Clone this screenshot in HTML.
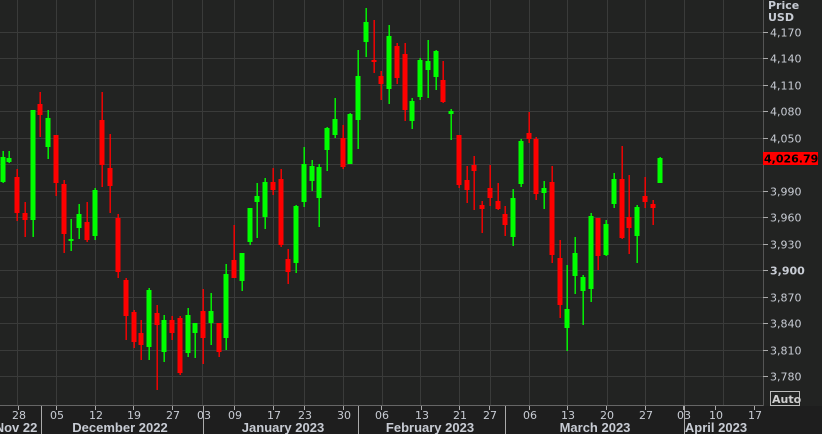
<!DOCTYPE html>
<html><head><meta charset="utf-8"><style>
html,body{margin:0;padding:0;background:#222322;width:822px;height:434px;overflow:hidden}
svg{display:block}
text{font-family:"DejaVu Sans","Liberation Sans",sans-serif}
.m{font-family:"Liberation Sans",sans-serif}
</style></head><body>
<svg id="s" width="822" height="434" xmlns="http://www.w3.org/2000/svg">
<rect width="822" height="434" fill="#222322"/>
<rect x="0" y="406" width="822" height="28" fill="#1e1e1e"/>
<g id="grid" stroke="#3a3b3a" stroke-width="1"></g>
<g id="c"></g>
<line x1="763.5" y1="0" x2="763.5" y2="406" stroke="#555" />
<line x1="0" y1="405.5" x2="763" y2="405.5" stroke="#666"/>
<g id="ax" fill="#c8ccd4" font-size="11"></g>
<text x="768" y="9" fill="#c8ccd4" font-size="11" font-weight="bold">Price</text>
<text x="768" y="21" fill="#c8ccd4" font-size="11" font-weight="bold">USD</text>
<rect x="763" y="152" width="55" height="13" fill="#ff0000"/>
<text x="764" y="162.5" fill="#000" font-size="11" font-weight="bold">4,026.79</text>
<rect x="770.5" y="391.5" width="29" height="14" fill="none" stroke="#bbb"/>
<text x="772" y="403" fill="#d0d0d0" font-size="11" font-weight="bold">Auto</text>
<g id="bt" font-size="11" fill="#c8ccd4" text-anchor="middle"></g>
</svg>
<script>
var NS="http://www.w3.org/2000/svg";
function el(p,t,a,txt){var e=document.createElementNS(NS,t);for(var k in a)e.setAttribute(k,a[k]);if(txt!=null)e.textContent=txt;document.getElementById(p).appendChild(e);}
var vx=[17,56,95,133,172,202,234,273,304,343,382,420,459,490,529,567,607,645,684,723];
vx.forEach(function(x){el("grid","line",{x1:x+.5,y1:0,x2:x+.5,y2:405});});
var labs=["4,170","4,140","4,110","4,080","4,050","4,020","3,990","3,960","3,930","3,900","3,870","3,840","3,810","3,780"];
labs.forEach(function(l,i){var y=Math.round(32+i*26.46)+.5;el("grid","line",{x1:0,y1:y,x2:763,y2:y});
el("ax","line",{x1:763,y1:y,x2:768,y2:y,stroke:"#aaa"});
if(i!=5)el("ax","text",{x:770,y:y+4,"font-weight":i==9?"bold":"normal"},l);});
var C=[[3,157,182,151,183,1],[9,158,162,151,163,1],[17,177,213,169,221,0],[25,213,220,202,237,0],[33,110,220,110,237,1],[40,104,115,92,137,0],[48,118,147,110,159,1],[56,135,183,135,196,0],[64,184,234,180,253,0],[71,239,241,219,251,1],[79,214,228,204,239,1],[87,222,240,202,242,0],[95,190,236,188,240,1],[102,120,165,92,187,0],[110,168,186,134,213,0],[118,218,272,214,278,0],[126,280,316,278,340,0],[134,312,342,310,348,0],[141,333,345,320,360,0],[149,290,347,288,360,1],[157,313,325,305,390,0],[164,320,352,315,362,1],[172,320,333,316,340,0],[180,318,373,316,375,0],[188,315,353,308,357,1],
[195,323,333,323,358,1],[203,311,338,289,364,0],[211,311,323,293,345,1],[219,323,352,323,357,0],[226,274,338,264,350,1],[234,260,278,225,278,0],[242,253,281,253,291,1],[250,208,242,208,245,1],[257,196,202,183,238,1],[265,182,217,178,229,1],[273,182,190,168,195,0],[281,179,245,169,247,0],[288,259,272,249,284,0],[296,206,263,205,273,1],[304,164,202,147,207,1],[312,166,181,160,191,1],[319,167,198,164,227,1],[327,128,150,127,171,1],[335,119,135,98,138,1],[343,138,167,125,169,0],[350,114,164,113,164,1],[358,76,120,50,149,1],[366,22,42,8,57,1],[374,60,62,20,73,0],[381,76,84,71,100,0],
[389,36,89,25,104,1],[397,46,78,43,84,0],[405,54,110,43,121,0],[412,101,121,98,129,1],[420,60,97,58,100,1],[428,61,70,40,98,1],[436,51,77,50,90,1],[443,80,102,61,103,0],[451,111,114,109,140,1],[459,135,185,135,188,0],[467,180,190,166,203,0],[474,165,171,156,210,0],[482,205,209,201,233,0],[490,188,198,165,206,0],[498,201,209,183,210,0],[505,214,225,206,236,0],[513,198,237,189,246,1],[521,141,184,139,187,1],[529,133,139,112,143,0],[536,139,194,137,200,0],[544,188,193,181,209,1],[552,182,255,166,263,0],[560,258,305,240,318,0],[567,309,328,265,351,1],[575,253,276,237,294,1],[583,277,291,275,325,1],[591,216,289,213,302,1],[598,218,256,218,270,0],[606,224,255,220,256,1],[614,179,204,173,208,1],[622,179,238,146,239,0],[629,217,228,175,254,0],[637,207,236,205,263,1],[645,196,202,177,208,0],[653,204,208,200,225,0],[660,158,183,157,183,1]];
C.forEach(function(c){var col=c[5]?"#00ff00":"#ff0000";
el("c","rect",{x:c[0]-0.5,y:c[3],width:1.4,height:c[4]-c[3],fill:col});
el("c","rect",{x:c[0]-2.5,y:c[1],width:5,height:Math.max(2,c[2]-c[1]),fill:col});});
var D=[[19,"28"],[57,"05"],[96,"12"],[134,"19"],[173,"27"],[204,"03"],[235,"09"],[274,"17"],[305,"23"],[344,"30"],[382,"06"],[422,"13"],[460,"21"],[490,"27"],[530,"06"],[568,"13"],[607,"20"],[646,"27"],[684,"03"],[716,"10"],[755,"17"]];
D.forEach(function(d){el("bt","line",{x1:d[0]-.5,y1:406,x2:d[0]-.5,y2:410,stroke:"#aaa"});el("bt","text",{x:d[0],y:419},d[1]);});
[41,203,358,505,684].forEach(function(x){el("bt","line",{x1:x+.5,y1:406,x2:x+.5,y2:434,stroke:"#aaa"});});
[[16,"Nov 22"],[120,"December 2022"],[283,"January 2023"],[430,"February 2023"],[595,"March 2023"],[716,"April 2023"]].forEach(function(m){el("bt","text",{x:m[0],y:432,"font-weight":"bold","font-size":"13","class":"m"},m[1]);});
</script>
</body></html>
